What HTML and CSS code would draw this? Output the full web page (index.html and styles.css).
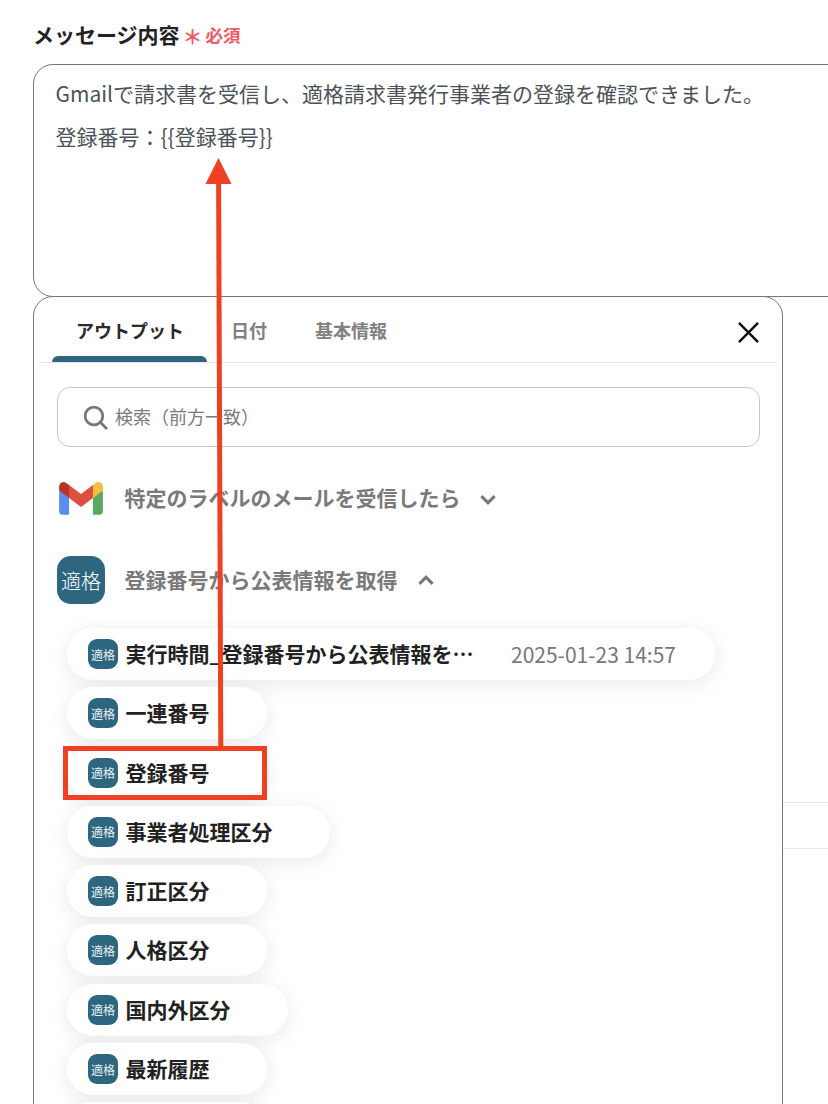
FILE: index.html
```html
<!DOCTYPE html>
<html lang="ja">
<head>
<meta charset="utf-8">
<title>メッセージ内容</title>
<link rel="stylesheet" href="styles.css">
</head>
<body>
<main class="page">
  <div class="label-row">
    <span class="label">メッセージ内容</span>
    <span class="star">＊</span>
    <span class="required">必須</span>
  </div>
  <div class="textarea">
    <p class="line">Gmailで請求書を受信し、適格請求書発行事業者の登録を確認できました。</p>
    <p class="line">登録番号：{{登録番号}}</p>
  </div>
  <div class="lower">
    <section class="panel">
      <div class="tabs">
        <div class="tab active">アウトプット</div>
        <div class="tab date">日付</div>
        <div class="tab info">基本情報</div>
        <svg class="close" viewBox="0 0 22 22" aria-hidden="true"><path d="M1 1L21 21M21 1L1 21"/></svg>
      </div>
      <div class="search">
        <svg class="search-icon" viewBox="0 0 24 24" aria-hidden="true"><circle cx="10.5" cy="10.5" r="8.5"/><path d="M16.6 16.6L23 23"/></svg>
        <span class="placeholder">検索（前方一致）</span>
      </div>
      <div class="group gmail-group">
        <svg class="gmail" viewBox="0 0 256 193" aria-hidden="true">
          <path fill="#5b8df0" d="M58.18 192.05V93.14L27.5 65.08 0 49.5v125.09c0 9.66 7.83 17.46 17.45 17.46h40.73z"/>
          <path fill="#5aa861" d="M197.82 192.05h40.73c9.65 0 17.45-7.83 17.45-17.45V49.5l-31.16 17.84-27.02 25.8v98.91z"/>
          <path fill="#dc5040" d="M58.18 93.14l-4.17-38.65 4.17-36.99L128 69.87l69.82-52.37 4.67 34.99-4.67 40.65L128 145.5z"/>
          <path fill="#f0bf40" d="M197.82 17.5v75.64L256 49.5V26.23c0-21.58-24.64-33.88-41.89-20.94l-16.29 12.21z"/>
          <path fill="#b93226" d="M0 49.5l26.76 20.07L58.18 93.14V17.5L41.89 5.29C24.61-7.65 0 4.65 0 26.23V49.5z"/>
        </svg>
        <span class="group-title">特定のラベルのメールを受信したら</span>
        <svg class="chev" viewBox="0 0 16 10" aria-hidden="true"><path d="M2 2L8 8L14 2"/></svg>
      </div>
      <div class="group app-group">
        <span class="app-icon">適格</span>
        <span class="group-title">登録番号から公表情報を取得</span>
        <svg class="chev" viewBox="0 0 16 10" aria-hidden="true"><path d="M2 8L8 2L14 8"/></svg>
      </div>
      <ul class="pills">
        <li class="pill wide"><span class="mini">適格</span><span class="pill-name">実行時間_登録番号から公表情報を…</span><span class="pill-value">2025-01-23 14:57</span></li>
        <li class="pill"><span class="mini">適格</span><span class="pill-name">一連番号</span></li>
        <li class="pill"><span class="mini">適格</span><span class="pill-name">登録番号</span></li>
        <li class="pill"><span class="mini">適格</span><span class="pill-name">事業者処理区分</span></li>
        <li class="pill"><span class="mini">適格</span><span class="pill-name">訂正区分</span></li>
        <li class="pill"><span class="mini">適格</span><span class="pill-name">人格区分</span></li>
        <li class="pill"><span class="mini">適格</span><span class="pill-name">国内外区分</span></li>
        <li class="pill"><span class="mini">適格</span><span class="pill-name">最新履歴</span></li>
        <li class="pill"></li>
      </ul>
    </section>
    <div class="side">
      <div class="side-row"></div>
    </div>
  </div>
</main>
<div class="highlight"></div>
<svg class="arrow" viewBox="0 0 828 1104" aria-hidden="true">
  <path class="arrow-shaft" d="M220.8 747L218.6 180"/>
  <path class="arrow-head" d="M218.5 158L231.5 184H205.5Z"/>
</svg>
</body>
</html>
```
FILE: styles.css
```css
* { box-sizing: border-box; }
html, body { margin: 0; height: 1104px; overflow: hidden; background: #fff; }
body { position: relative; font-family: "Noto Sans CJK JP", "Noto Sans", sans-serif; color: #222; }
.page { padding: 18px 0 0 33px; height: 1104px; overflow: hidden; }

.label-row { display: flex; align-items: center; height: 32px; margin-bottom: 14px; }
.label { font-size: 21px; font-weight: 700; color: #222; line-height: 32px; }
.star { width: 20px; margin-left: 3px; font-size: 20px; line-height: 32px; height: 32px; color: #ee5a66; font-weight: 700; padding-top: 3px; }
.required { font-size: 17.5px; font-weight: 700; color: #ee5a66; margin-left: 3px; line-height: 32px; padding-top: 1px; }

.textarea { width: 840px; height: 233px; border: 1px solid #777; border-radius: 20px; padding: 14px 0 0 21.5px; }
.line { margin: 0 0 14px; font-size: 21px; line-height: 29px; color: #4c5259; white-space: nowrap; }

.lower { display: flex; margin-top: -1px; align-items: flex-start; }
.panel { width: 750px; height: 900px; flex: none; border: 1px solid #777; border-radius: 20px; background: #fff; padding: 0 5px; }
.side { flex: none; width: 45px; padding-top: 506px; }
.side-row { height: 47px; border-top: 1px solid #e6e6e6; border-bottom: 1px solid #e6e6e6; }

.tabs { position: relative; display: flex; height: 66px; border-bottom: 1px solid #e4e4e4; }
.tab { font-size: 18px; font-weight: 700; line-height: 26px; padding-top: 20px; color: #808080; }
.tab.active { width: 155px; margin-left: 13px; padding-left: 24px; color: #2a2a2a; position: relative; }
.tab.active::after { content: ""; position: absolute; left: 0; right: 0; bottom: 0; height: 6px; background: #2e667f; border-radius: 6px 6px 0 0; }
.tab.date { margin-left: 24px; }
.tab.info { margin-left: 48px; }
.close { position: absolute; right: 18px; top: 25px; width: 21px; height: 21px; fill: none; stroke: #111; stroke-width: 2.6; }

.search { display: flex; align-items: center; height: 60px; margin: 24px 17px 0 18px; padding-left: 25px; border: 1px solid #c8c8c8; border-radius: 13px; }
.search-icon { width: 25px; height: 25px; fill: none; stroke: #777; stroke-width: 2.7; flex: none; }
.placeholder { margin-left: 7px; font-size: 18px; color: #7b7b7b; line-height: 24px; padding-bottom: 2px; }

.group { display: flex; align-items: center; }
.gmail-group { margin: 34px 0 0 20px; height: 35px; }
.gmail { width: 44px; height: 33px; flex: none; }
.group-title { font-size: 21px; font-weight: 700; color: #7a7a7a; line-height: 30px; padding-bottom: 3px; }
.gmail-group .group-title { margin-left: 21.5px; }
.chev { width: 18px; height: 11px; margin-left: 18px; fill: none; stroke: #777; stroke-width: 2.8; flex: none; }
.gmail-group .chev { margin-top: 1px; }
.app-group { margin: 40px 0 0 18px; height: 48px; }
.app-icon { width: 48px; height: 48px; flex: none; display: flex; align-items: center; justify-content: center; background: #2e667f; color: #fff; border-radius: 14px; font-size: 20px; font-weight: 300; }
.app-group .group-title { margin-left: 19.5px; }
.app-group .chev { margin-left: 19px; }

.pills { list-style: none; margin: 24px 0 0 28px; padding: 0; display: flex; flex-direction: column; align-items: flex-start; gap: 7.3px; }
.pill { display: flex; align-items: center; height: 52px; padding: 0 57px 0 21px; min-width: 200px; background: #fff; border-radius: 26px; box-shadow: 0 4px 22px rgba(0,0,0,.09); flex: none; }
.pill.wide { width: 648px; padding-right: 21px; }
.mini { width: 30px; height: 30px; flex: none; display: flex; align-items: center; justify-content: center; background: #2e667f; color: #e8f0f3; border-radius: 9px; font-size: 12px; font-weight: 400; }
.pill-name { margin-left: 7.5px; font-size: 21px; font-weight: 700; color: #222; line-height: 30px; white-space: nowrap; padding-bottom: 2px; }
.pill.wide .pill-name { width: 348px; overflow: hidden; }
.pill-value { margin-left: 37.5px; font-size: 21px; color: #777; white-space: nowrap; }

.highlight { position: absolute; left: 63px; top: 746px; width: 204px; height: 54px; border: 5px solid #ee4023; }
.arrow { position: absolute; left: 0; top: 0; width: 828px; height: 1104px; pointer-events: none; }
.arrow-shaft { fill: none; stroke: #ee4023; stroke-width: 5; }
.arrow-head { fill: #ee4023; }
```
